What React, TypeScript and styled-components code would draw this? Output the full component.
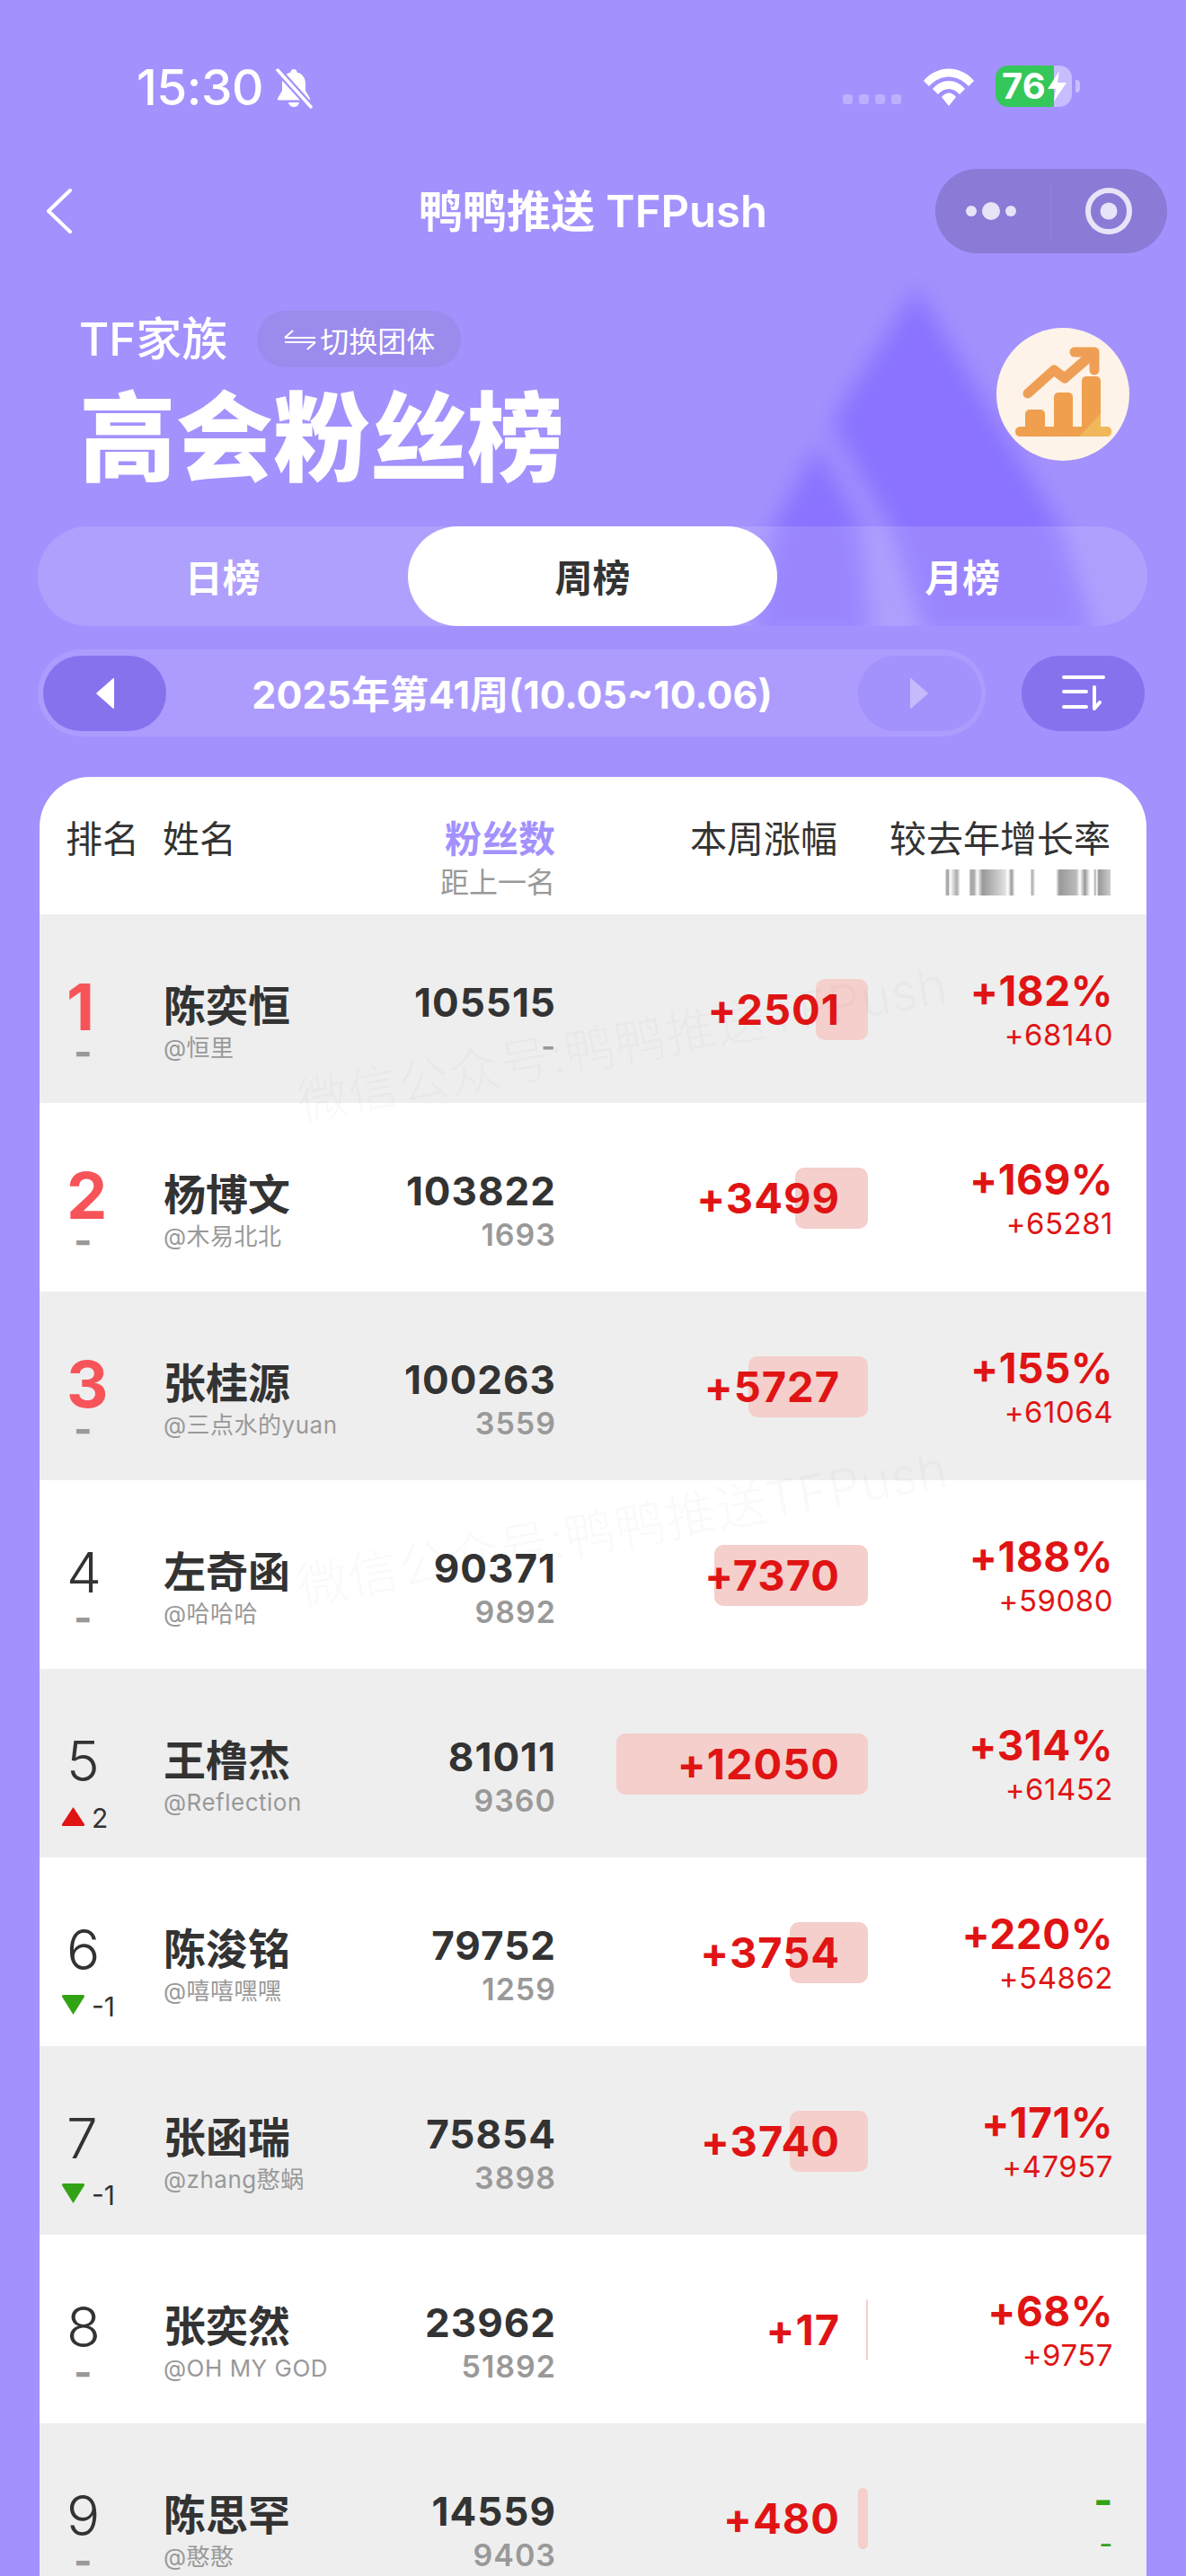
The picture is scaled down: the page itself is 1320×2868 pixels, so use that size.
import * as React from "react"
import styled, { createGlobalStyle } from "styled-components"

const GlobalStyle = createGlobalStyle`
  html, body {
    margin: 0;
    padding: 0;
    background: #a391fd;
  }
  * {
    box-sizing: border-box;
  }
`

const Page = styled.div`
  position: relative;
  width: 1320px;
  height: 2868px;
  overflow: hidden;
  background: #a391fd;
  font-family: Inter, "Noto Sans CJK SC", sans-serif;
  color: #fff;
`

const Mountains = styled.svg`
  position: absolute;
  top: 280px;
  left: 780px;
  width: 500px;
  height: 417px;
`

const Content = styled.div`
  position: relative;
  display: flex;
  flex-direction: column;
`

const StatusBar = styled.div`
  height: 188px;
  display: flex;
  align-items: flex-start;
  padding: 65px 0 0 152px;
`

const Clock = styled.div`
  font-size: 55px;
  line-height: 64px;
  font-weight: 500;
  letter-spacing: -0.5px;
`

const BellIcon = styled.svg`
  width: 46px;
  height: 46px;
  margin: 10px 0 0 11px;
`

const SignalDots = styled.div`
  display: flex;
  gap: 7px;
  margin: 40px 0 0 auto;
`

const SignalDot = styled.span`
  width: 11px;
  height: 11px;
  border-radius: 3px;
  background: rgba(255, 255, 255, 0.28);
`

const WifiIcon = styled.svg`
  width: 58px;
  height: 44px;
  margin: 10px 0 0 24px;
`

const Battery = styled.div`
  position: relative;
  width: 85px;
  height: 46px;
  margin: 8px 127px 0 23px;
  border-radius: 14px;
  background: linear-gradient(90deg, #34c759 0 65px, rgba(255, 255, 255, 0.4) 65px);
  font-size: 40px;
  line-height: 46px;
  font-weight: 700;
  padding-left: 7px;

  &::after {
    content: "";
    position: absolute;
    top: 16px;
    right: -9px;
    width: 5px;
    height: 14px;
    border-radius: 0 4px 4px 0;
    background: rgba(255, 255, 255, 0.4);
  }
`

const BoltIcon = styled.svg`
  position: absolute;
  top: 6px;
  left: 58px;
  width: 21px;
  height: 34px;
`

const NavBar = styled.div`
  position: relative;
  height: 94px;
  display: flex;
  align-items: center;
  justify-content: space-between;
  padding: 0 21px 0 51px;
`

const BackIcon = styled.svg`
  width: 30px;
  height: 50px;
`

const NavTitle = styled.div`
  position: absolute;
  top: 18px;
  left: 0;
  right: 0;
  text-align: center;
  font-size: 49px;
  line-height: 60px;
  font-weight: 600;
`

const Capsule = styled.div`
  width: 258px;
  height: 94px;
  border-radius: 47px;
  background: #8b7ad6;
  display: grid;
  grid-template-columns: 129px 129px;
  align-items: center;
  justify-items: center;
`

const CapsuleDots = styled.svg`
  width: 64px;
  height: 24px;
  margin-left: -1px;
`

const CapsuleTarget = styled.svg`
  width: 56px;
  height: 56px;
  margin-left: -1px;
`

const CapsuleDivider = styled.span`
  position: absolute;
  top: 16px;
  right: 150px;
  width: 1px;
  height: 60px;
  background: rgba(255, 255, 255, 0.1);
`

const Hero = styled.div`
  height: 304px;
  padding: 64px 0 0 88px;
  display: flex;
  justify-content: space-between;
`

const HeroText = styled.div`
  display: flex;
  flex-direction: column;
`

const HeroTop = styled.div`
  display: flex;
  align-items: center;
  gap: 33px;
`

const Family = styled.div`
  font-size: 51px;
  line-height: 62px;
  font-weight: 500;
`

const SwitchPill = styled.div`
  width: 227px;
  height: 63px;
  border-radius: 32px;
  background: #9a8bec;
  display: flex;
  align-items: center;
  justify-content: center;
  gap: 3px;
  font-size: 32px;
  font-weight: 400;
`

const SwitchIcon = styled.svg`
  width: 38px;
  height: 30px;
`

const HeroTitle = styled.h1`
  margin: 14px 0 0;
  font-size: 108px;
  line-height: 130px;
  font-weight: 900;
`

const ChartBadge = styled.svg`
  width: 148px;
  height: 148px;
  margin: 19px 63px 0 0;
`

const Tabs = styled.div`
  display: grid;
  grid-template-columns: repeat(3, 1fr);
  height: 111px;
  margin: 0 43px 0 42px;
  border-radius: 56px;
  background: rgba(255, 255, 255, 0.14);
`

const Tab = styled.div<{ $active?: boolean }>`
  display: flex;
  align-items: center;
  justify-content: center;
  padding-bottom: 2px;
  border-radius: 56px;
  font-size: 42px;
  font-weight: 700;
  background: ${(p) => (p.$active ? "#fff" : "transparent")};
  color: ${(p) => (p.$active ? "#333" : "#fff")};
`

const DateRow = styled.div`
  display: flex;
  justify-content: space-between;
  align-items: center;
  height: 97px;
  margin: 26px 46px 0 42px;
`

const DateBar = styled.div`
  width: 1055px;
  height: 97px;
  border-radius: 49px;
  background: #ad9cfd;
  display: flex;
  align-items: center;
  justify-content: space-between;
  padding: 0 5px 0 6px;
`

const DateLabel = styled.div`
  padding-bottom: 4px;
  font-size: 43px;
  font-weight: 700;
`

const RoundButton = styled.div<{ $off?: boolean }>`
  width: 137px;
  height: 84px;
  border-radius: 42px;
  display: flex;
  align-items: center;
  justify-content: center;
  background: ${(p) => (p.$off ? "#a492fc" : "#8772ee")};
`

const ArrowIcon = styled.svg`
  width: 24px;
  height: 36px;
`

const SortIcon = styled.svg`
  width: 50px;
  height: 46px;
`

const Card = styled.div`
  position: relative;
  margin: 45px 44px 0;
  border-radius: 56px 56px 0 0;
  background: #fff;
  overflow: hidden;
`

const HeaderRow = styled.div`
  position: relative;
  height: 153px;
  color: #333;
`

const HeaderRank = styled.div`
  position: absolute;
  top: 44px;
  left: 29px;
  font-size: 41px;
  line-height: 50px;
`

const HeaderName = styled(HeaderRank)`
  left: 137px;
`

const HeaderFans = styled.div`
  position: absolute;
  top: 44px;
  right: 658px;
  text-align: right;
  font-size: 41px;
  line-height: 50px;
  font-weight: 700;
  color: #a391fd;
`

const HeaderFansSub = styled.div`
  font-size: 32px;
  line-height: 48px;
  font-weight: 400;
  color: #999;
`

const HeaderGain = styled.div`
  position: absolute;
  top: 44px;
  right: 344px;
  font-size: 41px;
  line-height: 50px;
`

const HeaderRate = styled.div`
  position: absolute;
  top: 44px;
  right: 40px;
  font-size: 41px;
  line-height: 50px;
`

const BlurredSub = styled.div`
  position: absolute;
  top: 103px;
  right: 40px;
  width: 190px;
  height: 29px;
  background: linear-gradient(
    90deg,
    #fff 0 3%,
    #aaa 4% 5%,
    #fff 6%,
    #aaa 10%,
    #fff 12% 17%,
    #aaa 18% 20%,
    #fff 22%,
    #999 25%,
    #ddd 38%,
    #fff 40%,
    #999 42%,
    #fff 44% 53%,
    #aaa 54%,
    #fff 56% 68%,
    #999 70%,
    #bbb 80%,
    #fff 82%,
    #999 85%,
    #fff 88% 90%,
    #aaa 91%,
    #fff 92%,
    #999 93%,
    #ccc 100%
  );
`

const Row = styled.div<{ $shaded: boolean }>`
  display: grid;
  grid-template-columns: 138px 220px 216px 348px 273px 37px;
  height: 210px;
  background: ${(p) => (p.$shaded ? "#eeeeee" : "#fff")};
`

const RankCell = styled.div`
  display: flex;
  flex-direction: column;
  padding: 67px 0 0 23px;
`

const RankNumber = styled.div<{ $top: boolean }>`
  margin-left: 7px;
  font-size: ${(p) => (p.$top ? "72px" : "62px")};
  line-height: 72px;
  font-weight: ${(p) => (p.$top ? 700 : 300)};
  color: ${(p) => (p.$top ? "#f7545a" : "#333")};
`

const RankFlat = styled.div`
  margin: -3px 0 0 15px;
  font-size: 44px;
  line-height: 34px;
  font-weight: 700;
  color: #999;
`

const RankMove = styled.div`
  display: flex;
  align-items: center;
  gap: 6px;
  margin-top: 9px;
  font-size: 30px;
  line-height: 36px;
  color: #333;
`

const MoveIcon = styled.svg`
  width: 29px;
  height: 24px;
  margin-top: -4px;
`

const NameCell = styled.div`
  padding-top: 74px;
  white-space: nowrap;
`

const Name = styled.div`
  font-size: 47px;
  line-height: 56px;
  font-weight: 700;
  color: #333;
`

const Handle = styled.div`
  margin-top: 4px;
  font-size: 26px;
  line-height: 30px;
  letter-spacing: 0.5px;
  color: #999;
`

const FansCell = styled.div`
  padding-top: 73px;
  text-align: right;
`

const FansValue = styled.div`
  margin-right: -1px;
  font-size: 44px;
  line-height: 50px;
  font-weight: 700;
  letter-spacing: 1px;
  color: #333;
`

const FansGap = styled.div`
  margin: 4px -1px 0 0;
  font-size: 34px;
  line-height: 40px;
  font-weight: 600;
  letter-spacing: 1px;
  color: #999;
`

const GainCell = styled.div`
  position: relative;
  display: flex;
  align-items: center;
  justify-content: flex-end;
  padding-right: 31px;
`

const GainBar = styled.div`
  position: absolute;
  right: 0;
  top: 72px;
  height: 68px;
  min-width: 2px;
  border-radius: 10px;
  background: #f4cfcb;
`

const GainValue = styled.div`
  position: relative;
  font-size: 47px;
  font-weight: 700;
  letter-spacing: 1px;
  color: #e01414;
`

const RateCell = styled.div<{ $none: boolean }>`
  padding-top: 60px;
  text-align: right;
  color: ${(p) => (p.$none ? "#32a314" : "#e01414")};
`

const RateValue = styled.div`
  font-size: 46px;
  line-height: 50px;
  font-weight: 700;
  letter-spacing: 0.5px;
`

const RateDelta = styled.div`
  margin-top: 4px;
  font-size: 33px;
  line-height: 40px;
  font-weight: 400;
  letter-spacing: 0.5px;
`

const Watermark = styled.div<{ $top: number }>`
  position: absolute;
  top: ${(p) => p.$top}px;
  left: 66px;
  right: 0;
  text-align: center;
  white-space: nowrap;
  font-size: 56px;
  line-height: 60px;
  font-weight: 300;
  letter-spacing: 1px;
  color: rgba(0, 0, 0, 0.025);
  transform: rotate(-10.4deg);
  pointer-events: none;
`

interface RankItem {
  rank: number
  move: number
  name: string
  handle: string
  fans: number
  gap: string
  gain: number
  rate: string
  delta: string
}

const items: RankItem[] = [
  { rank: 1, move: 0, name: "陈奕恒", handle: "@恒里", fans: 105515, gap: "-", gain: 2501, rate: "+182%", delta: "+68140" },
  { rank: 2, move: 0, name: "杨博文", handle: "@木易北北", fans: 103822, gap: "1693", gain: 3499, rate: "+169%", delta: "+65281" },
  { rank: 3, move: 0, name: "张桂源", handle: "@三点水的yuan", fans: 100263, gap: "3559", gain: 5727, rate: "+155%", delta: "+61064" },
  { rank: 4, move: 0, name: "左奇函", handle: "@哈哈哈", fans: 90371, gap: "9892", gain: 7370, rate: "+188%", delta: "+59080" },
  { rank: 5, move: 2, name: "王橹杰", handle: "@Reflection", fans: 81011, gap: "9360", gain: 12050, rate: "+314%", delta: "+61452" },
  { rank: 6, move: -1, name: "陈浚铭", handle: "@嘻嘻嘿嘿", fans: 79752, gap: "1259", gain: 3754, rate: "+220%", delta: "+54862" },
  { rank: 7, move: -1, name: "张函瑞", handle: "@zhang憨蜗", fans: 75854, gap: "3898", gain: 3740, rate: "+171%", delta: "+47957" },
  { rank: 8, move: 0, name: "张奕然", handle: "@OH MY GOD", fans: 23962, gap: "51892", gain: 17, rate: "+68%", delta: "+9757" },
  { rank: 9, move: 0, name: "陈思罕", handle: "@憨憨", fans: 14559, gap: "9403", gain: 480, rate: "-", delta: "-" },
]

const MAX_BAR = 280
const maxGain = 12050

const RankBlock: React.FC<{ item: RankItem }> = ({ item }) => (
  <RankCell>
    <RankNumber $top={item.rank <= 3}>{item.rank}</RankNumber>
    {item.move === 0 && <RankFlat>-</RankFlat>}
    {item.move > 0 && (
      <RankMove>
        <MoveIcon viewBox="0 0 29 24">
          <path d="M14.5 2 L27 21 Q27.5 23 25 23 L4 23 Q1.5 23 2 21 Z" fill="#e01414" />
        </MoveIcon>
        {item.move}
      </RankMove>
    )}
    {item.move < 0 && (
      <RankMove>
        <MoveIcon viewBox="0 0 29 24">
          <path d="M14.5 23 L27 3 Q27.5 1 25 1 L4 1 Q1.5 1 2 3 Z" fill="#32a314" />
        </MoveIcon>
        {item.move}
      </RankMove>
    )}
  </RankCell>
)

export default function App() {
  return (
    <Page>
      <GlobalStyle />
      <Mountains viewBox="0 0 500 417">
        <defs>
          <filter id="soft" x="-30%" y="-30%" width="160%" height="160%">
            <feGaussianBlur stdDeviation="13" />
          </filter>
          <clipPath id="hero-clip">
            <rect x="0" y="0" width="500" height="417" />
          </clipPath>
        </defs>
        <g clipPath="url(#hero-clip)">
          <g filter="url(#soft)" fill="#8a72ff">
            <path d="M240 40 L145 190 L210 306 L250 430 L440 430 L400 306 Z" />
            <path d="M130 215 L80 306 L55 430 L190 430 L178 306 Z" />
          </g>
        </g>
      </Mountains>
      <Content>
        <StatusBar>
          <Clock>15:30</Clock>
          <BellIcon viewBox="0 0 46 46">
            <path d="M23 2c2 0 3.500 1.500 3.500 3.500C33 7 36 12.500 36 18v8l5 8.500c.5 1-.2 2-1.300 2H6.300c-1.100 0-1.800-1-1.300-2L10 26v-8c0-5.500 3-11 9.500-12.500C19.500 3.500 21 2 23 2z" fill="#fff" />
            <path d="M17 39h12c-.5 3-3 5-6 5s-5.500-2-6-5z" fill="#fff" />
            <path d="M5 3 L42 44" stroke="#a391fd" strokeWidth="8" />
            <path d="M5 3 L42 44" stroke="#fff" strokeWidth="3.500" strokeLinecap="round" />
          </BellIcon>
          <SignalDots>
            <SignalDot />
            <SignalDot />
            <SignalDot />
            <SignalDot />
          </SignalDots>
          <WifiIcon viewBox="0 0 58 44">
            <path d="M1 15 C16 -3 42 -3 57 15 L51 21 C38 7 20 7 7 21 Z" fill="#fff" />
            <path d="M11 24 C21 12 37 12 47 24 L41 30 C34 22 24 22 17 30 Z" fill="#fff" />
            <path d="M21 33 C26 27 32 27 37 33 L29 43 Z" fill="#fff" />
          </WifiIcon>
          <Battery>
            76
            <BoltIcon viewBox="0 0 21 34">
              <path d="M13 0 L0 20 H9 L7 34 L21 13 H11 Z" fill="#fff" />
            </BoltIcon>
          </Battery>
        </StatusBar>
        <NavBar>
          <BackIcon viewBox="0 0 30 50">
            <path d="M27 2 L3 25 L27 48" fill="none" stroke="#fff" strokeWidth="4" strokeLinecap="round" strokeLinejoin="round" />
          </BackIcon>
          <NavTitle>鸭鸭推送 TFPush</NavTitle>
          <Capsule>
            <CapsuleDots viewBox="0 0 64 24">
              <circle cx="8" cy="12" r="6" fill="#e8e4f8" />
              <circle cx="30" cy="12" r="10" fill="#e8e4f8" />
              <circle cx="52" cy="12" r="6" fill="#e8e4f8" />
            </CapsuleDots>
            <CapsuleTarget viewBox="0 0 56 56">
              <circle cx="28" cy="28" r="23" fill="none" stroke="#e8e4f8" strokeWidth="6" />
              <circle cx="28" cy="28" r="9.500" fill="#e8e4f8" />
            </CapsuleTarget>
          </Capsule>
          <CapsuleDivider />
        </NavBar>
        <Hero>
          <HeroText>
            <HeroTop>
              <Family>TF家族</Family>
              <SwitchPill>
                <SwitchIcon viewBox="0 0 38 30">
                  <path d="M2 13 L11 5 M2 13 H36 M36 18 H2 M36 18 L27 26" fill="none" stroke="#fff" strokeWidth="2.200" />
                </SwitchIcon>
                切换团体
              </SwitchPill>
            </HeroTop>
            <HeroTitle>高会粉丝榜</HeroTitle>
          </HeroText>
          <ChartBadge viewBox="0 0 148 148">
            <circle cx="74" cy="74" r="74" fill="#fdf3e8" />
            <rect x="21" y="110" width="107" height="11" rx="5.500" fill="#ef9f4d" />
            <rect x="32" y="91" width="22" height="26" rx="5" fill="#ef9f4d" />
            <rect x="64" y="72" width="21" height="45" rx="5" fill="#ef9f4d" />
            <rect x="95" y="54" width="21" height="63" rx="5" fill="#ef9f4d" />
            <path d="M92 121 L116 95 V110 H122 Q128 110 128 115.500 Q128 121 122 121 Z" fill="#f0b85a" />
            <path d="M35 73 L64 47 L76 56 L107 29" fill="none" stroke="#ef9f55" strokeWidth="11" strokeLinecap="round" strokeLinejoin="round" />
            <path d="M87 27 H109 V47" fill="none" stroke="#ef9f55" strokeWidth="11" strokeLinecap="round" strokeLinejoin="round" />
          </ChartBadge>
        </Hero>
        <Tabs>
          <Tab>日榜</Tab>
          <Tab $active>周榜</Tab>
          <Tab>月榜</Tab>
        </Tabs>
        <DateRow>
          <DateBar>
            <RoundButton>
              <ArrowIcon viewBox="0 0 24 36">
                <path d="M22 2 V34 Q22 36 20 34 L3 19 Q1.500 18 3 17 L20 2 Q22 0 22 2 Z" fill="#fff" />
              </ArrowIcon>
            </RoundButton>
            <DateLabel>2025年第41周(10.05~10.06)</DateLabel>
            <RoundButton $off>
              <ArrowIcon viewBox="0 0 24 36">
                <path d="M2 2 V34 Q2 36 4 34 L21 19 Q22.500 18 21 17 L4 2 Q2 0 2 2 Z" fill="#c6bafd" />
              </ArrowIcon>
            </RoundButton>
          </DateBar>
          <RoundButton>
            <SortIcon viewBox="0 0 50 46">
              <path d="M3 5 H47 M3 21 H28 M3 38 H28 M37 16 V40 L43 33" fill="none" stroke="#fff" strokeWidth="4" strokeLinecap="round" strokeLinejoin="round" />
            </SortIcon>
          </RoundButton>
        </DateRow>
        <Card>
          <HeaderRow>
            <HeaderRank>排名</HeaderRank>
            <HeaderName>姓名</HeaderName>
            <HeaderFans>
              粉丝数
              <HeaderFansSub>距上一名</HeaderFansSub>
            </HeaderFans>
            <HeaderGain>本周涨幅</HeaderGain>
            <HeaderRate>较去年增长率</HeaderRate>
            <BlurredSub />
          </HeaderRow>
          {items.map((item, i) => (
            <Row key={item.rank} $shaded={i % 2 === 0}>
              <RankBlock item={item} />
              <NameCell>
                <Name>{item.name}</Name>
                <Handle>{item.handle}</Handle>
              </NameCell>
              <FansCell>
                <FansValue>{item.fans}</FansValue>
                <FansGap>{item.gap}</FansGap>
              </FansCell>
              <GainCell>
                <GainBar style={{ width: (item.gain / maxGain) * MAX_BAR }} />
                <GainValue>+{item.gain}</GainValue>
              </GainCell>
              <RateCell $none={item.rate === "-"}>
                <RateValue>{item.rate}</RateValue>
                <RateDelta>{item.delta}</RateDelta>
              </RateCell>
            </Row>
          ))}
          <Watermark $top={267}>微信公众号:鸭鸭推送TFPush</Watermark>
          <Watermark $top={806}>微信公众号:鸭鸭推送TFPush</Watermark>
        </Card>
      </Content>
    </Page>
  )
}
